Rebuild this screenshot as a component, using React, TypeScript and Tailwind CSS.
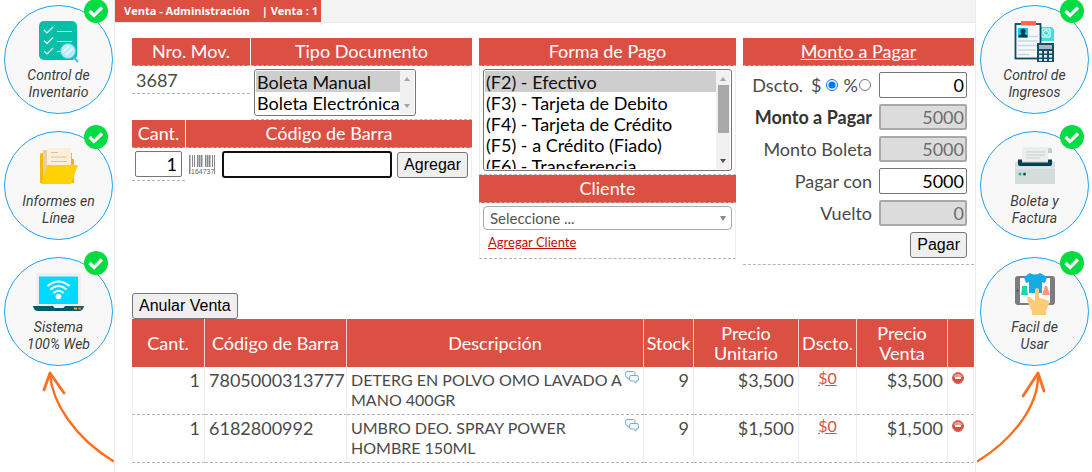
import React from 'react';

const ITEMS = [
  { qty: 1, code: '7805000313777', name: 'DETERG EN POLVO OMO LAVADO A MANO 400GR', stock: 9, unit: '$3,500', total: '$3,500' },
  { qty: 1, code: '6182800992', name: 'UMBRO DEO. SPRAY POWER HOMBRE 150ML', stock: 9, unit: '$1,500', total: '$1,500' },
];

const PAYMENTS = [
  '(F2) - Efectivo',
  '(F3) - Tarjeta de Debito',
  '(F4) - Tarjeta de Crédito',
  '(F5) - a Crédito (Fiado)',
  '(F6) - Transferencia',
];

const BARS = [0, 3, 5, 8, 10, 12, 16, 18, 20, 23, 25];

/* ---------- feature icons ---------- */

function ChecklistIcon() {
  return (
    <svg width="40" height="42" viewBox="0 0 40 42" fill="none">
      <rect width="38" height="39" rx="5" fill="#06bfa8" />
      <g stroke="#fff" strokeWidth="1.2">
        <path d="M5 9l3 3 6-6M5 19.500l3 3 6-6M5 30l3 3 6-6" />
        <path d="M18 10.500h15M18 20.500h15M18 30.500h6" />
      </g>
      <circle cx="29" cy="30" r="7.500" fill="#b5ebfb" stroke="#5fc9ee" />
      <path d="M24 31l6-6M27 34l7-7" stroke="#dff7ff" strokeWidth="2" />
      <path d="M34.500 36l4.500 5" stroke="#4db8e8" strokeWidth="2" />
    </svg>
  );
}

function FolderIcon() {
  return (
    <svg width="38" height="38" viewBox="0 0 38 38">
      <path d="M0 8q0-2 2-2h30v6h2v24H0z" fill="#f5b70c" />
      <path d="M3 3h24v32H3z" fill="#e9cfa9" />
      <path d="M7 1h24v28H7z" fill="#fdeedc" />
      <path d="M11 5.500h7M11 10h16M11 14.500h16" stroke="#d9c19a" strokeWidth="1.200" />
      <path d="M7 18h31l-7 19H1z" fill="#ffd203" />
    </svg>
  );
}

function LaptopIcon() {
  return (
    <svg width="52" height="38" viewBox="0 0 52 38" fill="none">
      <rect x="3" width="45" height="35" rx="2" fill="#efefef" />
      <rect x="6" y="3.500" width="39" height="27.500" fill="#00d9ff" />
      <g stroke="#fff" strokeWidth="1.900">
        <path d="M14.500 13q11-9 22 0M17.500 16.500q8-7 16 0M20.500 20q5-4.500 10 0" />
      </g>
      <circle cx="25.500" cy="23.500" r="2.800" fill="#fff" />
      <path d="M0 33h51q-1 5-5 5H5q-4 0-5-5z" fill="#035a6e" />
      <path d="M20 33h12l-1.500 2h-9z" fill="#e8f4f7" />
      <path d="M41 34.500h3v2h-3z" fill="#ff9f43" />
      <path d="M45 34.500h3v2h-3z" fill="#ff6b4a" />
    </svg>
  );
}

function ClipboardIcon() {
  return (
    <svg width="42" height="42" viewBox="0 0 42 42" fill="none">
      <path d="M27 6h11l2 3v11H27z" fill="#3fe0dc" />
      <path d="M28 8h8v8h-8z" stroke="#fff" />
      <circle cx="32" cy="12" r="2.500" stroke="#fff" />
      <rect x="1.500" y="3" width="25" height="34.500" fill="#f6f8f9" stroke="#0a4b63" strokeWidth="1.800" />
      <path d="M7 0h15v4.500H7z" fill="#ff6a4d" />
      <path d="M4 7h10v9.500H4z" fill="#00d4f5" />
      <path d="M6.500 10a2.500 2.500 0 115 0c0 2-1 3-1 3l3 1.500v2H4.500v-2l3-1.500s-1-1-1-3z" fill="#08384d" />
      <path d="M15 15.500h9M4 20h20M4 24.500h19M4 29h18M4 33.500h11" stroke="#c9d6e2" strokeWidth="1.600" />
      <rect x="23" y="22" width="17" height="19" fill="#164e68" />
      <path d="M25 24h13v4H25z" fill="#aab6c6" />
      <path d="M25 30h3v2.500h-3zM30 30h3v2.500h-3zM35 30h3v2.500h-3zM25 34h3v2.500h-3zM30 34h3v2.500h-3zM35 34h3v2.500h-3zM25 38h3v2h-3zM30 38h3v2h-3zM35 38h3v2h-3z" fill="#dcebf2" />
    </svg>
  );
}

function PrinterIcon() {
  return (
    <svg width="42" height="38" viewBox="0 0 42 38" fill="none">
      <path d="M34 1q4-1 4 2v3h-4z" fill="#c3cccc" />
      <path d="M8 3q0-3 3-3h25q-2 1-2 4v14H8z" fill="#eceeee" />
      <path d="M1 16q0-2 3-2h34q3 0 3 2v21H1z" fill="#d5dcdc" />
      <path d="M1 20h40v2H1z" fill="#e0e5e5" />
      <path d="M4 12.500h4v3h26v-3h4V17q0 2-3 2H7q-3 0-3-2z" fill="#063f53" />
      <path d="M8 8h26v6H8z" fill="#eceeee" />
      <path d="M12 5h19M12 8h19M12 11h14" stroke="#c6cdcd" />
      <circle cx="6" cy="27" r="1.500" fill="#10b8a0" />
      <circle cx="10.500" cy="27" r="1.500" fill="#0a5366" />
    </svg>
  );
}

function TabletIcon() {
  return (
    <svg width="40" height="42" viewBox="0 0 40 42">
      <rect y="3" width="40" height="29" rx="3" fill="#7c7c7f" />
      <path d="M5 5h30v25H5z" fill="#fafafa" />
      <circle cx="2.500" cy="17.500" r="1" fill="#444" />
      <path d="M7 13h5v3l1 6H6l1-6z" fill="#1ed3ad" />
      <path d="M30 13h2l3 9h-8z" fill="#ff9879" />
      <path d="M15 0q5 3 10 0l7 4-2 6-3-1v11H14V9l-3 1-2-6z" fill="#16abe3" />
      <path d="M20 18q0-3 2-3t2 3v7l8 2q3 1 2 4l-3 7v4H17v-4q-4-6-5-13 2-3 5 1l3 2z" fill="#fccb78" />
    </svg>
  );
}

const LEFT_FEATURES = [
  { label: ['Control de', 'Inventario'], icon: <ChecklistIcon /> },
  { label: ['Informes en', 'Línea'], icon: <FolderIcon /> },
  { label: ['Sistema', '100% Web'], icon: <LaptopIcon /> },
];

const RIGHT_FEATURES = [
  { label: ['Control de', 'Ingresos'], icon: <ClipboardIcon /> },
  { label: ['Boleta y', 'Factura'], icon: <PrinterIcon /> },
  { label: ['Facil de', 'Usar'], icon: <TabletIcon /> },
];

function Feature({ label, icon }: { label: string[]; icon: React.ReactNode }) {
  return (
    <li className="relative flex size-[109px] flex-col items-center rounded-full border border-[#1ba3f5] bg-[#f8f8f8] pt-[15px]">
      <div className="flex h-[46px] items-start">{icon}</div>
      <p className="text-center font-['Roboto',sans-serif] text-[14px] leading-[17px] text-[#3c3c3c] italic">
        {label[0]}
        <br />
        {label[1]}
      </p>
      <svg className="absolute -top-[7px] right-1" width="24" height="24" viewBox="0 0 24 24" fill="none">
        <circle cx="12" cy="12" r="12" fill="#02dc43" />
        <path d="M5.500 12l4.500 4.500 8-8" stroke="#fff" strokeWidth="3.200" />
      </svg>
    </li>
  );
}

/* ---------- form pieces ---------- */

function Heading({ children, className = '' }: { children?: React.ReactNode; className?: string }) {
  return (
    <h2 className={`h-7 border-b border-dashed border-[#d8a09a] bg-[#dc5044] text-center leading-[27px] text-white ${className}`}>
      {children}
    </h2>
  );
}

function ScrollTrack({ thumb }: { thumb?: boolean }) {
  return (
    <div aria-hidden="true" className="flex w-[14px] flex-col items-center justify-between bg-[#f1f1f1] py-1.5">
      <svg width="6" height="4" viewBox="0 0 6 4"><path d="M3 0l3 4H0z" fill="#a3a3a3" /></svg>
      {thumb && <div className="mt-1 mb-auto h-12 w-[11px] bg-[#a8a8a8]" />}
      <svg width="6" height="4" viewBox="0 0 6 4"><path d="M0 0h6L3 4z" fill={thumb ? '#505050' : '#a3a3a3'} /></svg>
    </div>
  );
}

function ListBox({ label, options, className, thumb }: { label: string; options: string[]; className: string; thumb?: boolean }) {
  return (
    <div className={`flex overflow-hidden rounded-[3px] border border-[#767676] bg-white p-px ${className}`}>
      <select
        aria-label={label}
        size={options.length}
        defaultValue={options[0]}
        className="h-full min-w-0 flex-1 overflow-hidden bg-none p-0 text-black outline-none [scrollbar-width:none]"
      >
        {options.map((o) => (
          <option key={o} className="h-[21px] min-h-0 px-px py-0 leading-[21px] checked:bg-[#cecece]">
            {o}
          </option>
        ))}
      </select>
      <ScrollTrack thumb={thumb} />
    </div>
  );
}

function Button({ children }: { children: React.ReactNode }) {
  return (
    <button className="h-[26px] shrink-0 rounded-[3px] border border-[#767676] bg-[#efefef] px-1.5 font-['Liberation_Sans',sans-serif] text-base leading-6 whitespace-nowrap text-black">
      {children}
    </button>
  );
}

function AmountRow({ id, label, value, locked, bold }: { id: string; label: React.ReactNode; value: string; locked?: boolean; bold?: boolean }) {
  return (
    <div className="flex items-center justify-end gap-[7px]">
      <label htmlFor={id} className={bold ? 'font-bold text-[#333]' : ''}>{label}</label>
      <input
        id={id}
        defaultValue={value}
        disabled={locked}
        className="h-[26px] w-[88px] rounded-[2px] border border-[#767676] bg-white px-0.5 text-right text-black disabled:border-2 disabled:border-[#a9a9a9] disabled:bg-[#dcdcdc] disabled:px-px disabled:text-[#6d6d6d]"
      />
    </div>
  );
}

function DocumentPanel() {
  return (
    <section>
      <div className="flex gap-px">
        <div className="w-[118px] shrink-0">
          <Heading>Nro. Mov.</Heading>
          <p className="h-7 border-b border-dashed border-[#b5b5b5] pl-1 leading-7">3687</p>
        </div>
        <div className="min-w-0 flex-1">
          <Heading>Tipo Documento</Heading>
          <div className="h-[54px] border-r border-b border-r-[#eee] border-b-[#b5b5b5] px-[3px] pt-[3px] [border-bottom-style:dashed]">
            <ListBox label="Tipo Documento" options={['Boleta Manual', 'Boleta Electrónica']} className="h-[47px] w-[162px]" />
          </div>
        </div>
      </div>
      <div className="flex gap-px">
        <div className="w-[53px] shrink-0">
          <Heading>Cant.</Heading>
          <div className="border-b border-dashed border-[#b5b5b5] px-[3px] py-[3px]">
            <input aria-label="Cantidad" defaultValue="1" className="block h-[26px] w-full rounded-[2px] border border-[#767676] px-1 text-right text-black" />
          </div>
        </div>
        <div className="min-w-0 flex-1">
          <Heading>Código de Barra</Heading>
          <div className="flex items-center gap-[5px] border-r border-[#eee] px-[3px] pt-[3px]">
            <svg width="28" height="20" viewBox="0 0 28 20" className="shrink-0">
              {BARS.map((x) => (
                <rect key={x} x={x} width={x % 2 ? 1 : 1.5} height={x === 0 || x === 25 ? 19 : 12} fill="#8a8a8a" />
              ))}
              <text x="2" y="19" fontSize="7" fill="#666" fontFamily="Liberation Sans">164737</text>
            </svg>
            <input autoFocus aria-label="Código de Barra" className="h-[27px] min-w-0 flex-1 rounded-[3px] border-2 border-[#111] px-1 outline-none" />
            <Button>Agregar</Button>
          </div>
        </div>
      </div>
    </section>
  );
}

function PaymentPanel() {
  return (
    <section>
      <Heading>Forma de Pago</Heading>
      <div className="border-x border-b border-x-[#eee] border-b-[#b5b5b5] p-[3px] [border-bottom-style:dashed]">
        <ListBox label="Forma de Pago" options={PAYMENTS} className="h-[102px]" thumb />
      </div>
      <Heading>Cliente</Heading>
      <div className="h-14 border-x border-b border-x-[#eee] border-b-[#b5b5b5] p-[3px] [border-bottom-style:dashed]">
        <div className="relative flex items-center">
          <select aria-label="Cliente" className="h-6 w-full appearance-none rounded-[4px] border border-[#aaa] bg-white px-1.5 text-[15px] text-[#555]">
            <option>Seleccione ...</option>
          </select>
          <svg className="pointer-events-none absolute right-1.5" width="6" height="5" viewBox="0 0 6 5"><path d="M0 0h6L3 5z" fill="#888" /></svg>
        </div>
        <a href="#cliente" className="block pl-[5px] text-[13px] leading-6 text-[#c00d0d] underline">Agregar Cliente</a>
      </div>
    </section>
  );
}

function TotalsPanel() {
  return (
    <section className="border-b border-dashed border-[#b5b5b5] pb-1.5">
      <Heading className="underline">Monto a Pagar</Heading>
      <div className="flex flex-col gap-1.5 pt-1.5 pr-[7px] leading-[26px]">
        <div className="flex items-center justify-end">
          <label htmlFor="dscto" className="mr-2">Dscto.</label>
          <label htmlFor="pesos">$</label>
          <input id="pesos" type="radio" name="modo" defaultChecked className="mr-1.5 ml-1 size-3 accent-[#0075ff]" />
          <label htmlFor="pct">%</label>
          <input id="pct" type="radio" name="modo" className="mr-2 ml-px size-3" />
          <input id="dscto" defaultValue="0" className="h-[26px] w-[88px] rounded-[2px] border border-[#767676] px-0.5 text-right text-black" />
        </div>
        <AmountRow id="monto" label="Monto a Pagar" value="5000" locked bold />
        <AmountRow id="boleta" label="Monto Boleta" value="5000" locked />
        <AmountRow id="pagar" label="Pagar con" value="5000" />
        <AmountRow id="vuelto" label="Vuelto" value="0" locked />
        <div className="flex justify-end">
          <Button>Pagar</Button>
        </div>
      </div>
    </section>
  );
}

function CommentIcon() {
  return (
    <svg width="14" height="13" viewBox="0 0 14 13" fill="#f3f8fd" stroke="#86a8d0">
      <path d="M2 .5h6.500q1.500 0 1.500 2v2q0 2-1.500 2H5L3 8.500v-2H2q-1.500 0-1.500-2v-2q0-2 1.500-2z" />
      <path d="M6 4.500h6q1.500 0 1.500 2v1.500q0 2-1.500 2h-1v2.200L8.500 10H6q-1.500 0-1.500-2V6.500q0-2 1.500-2z" />
    </svg>
  );
}

function RemoveIcon() {
  return (
    <svg width="12" height="12" viewBox="0 0 12 12">
      <circle cx="6" cy="6" r="5.500" fill="#e0493f" stroke="#d9665d" />
      <path d="M1.500 5a4.600 4 0 019 0z" fill="#f09a92" />
      <path d="M3 5h6v2H3z" fill="#fff" />
    </svg>
  );
}

function ItemsTable() {
  const th = 'border-r border-[#f6cfcb] p-0 font-normal last:border-r-0';
  const td = 'border-r border-r-[#eee] border-b border-b-[#b5b5b5] px-1 pt-[3px] align-top [border-bottom-style:dashed]';
  return (
    <table className="w-full table-fixed border-separate border-spacing-0 leading-5">
      <thead>
        <tr className="h-12 bg-[#dc5044] text-white">
          <th className={`${th} w-[73px]`}>Cant.</th>
          <th className={`${th} w-[142px]`}>Código de Barra</th>
          <th className={th}>Descripción</th>
          <th className={`${th} w-[50px]`}>Stock</th>
          <th className={`${th} w-[105px]`}>Precio<br />Unitario</th>
          <th className={`${th} w-[58px]`}>Dscto.</th>
          <th className={`${th} w-[91px]`}>Precio<br />Venta</th>
          <th className={`${th} w-[26px]`} aria-label="Quitar" />
        </tr>
      </thead>
      <tbody>
        {ITEMS.map((item) => (
          <tr key={item.code} className="h-12">
            <td className={`${td} border-l border-l-[#eee] text-right`}>{item.qty}</td>
            <td className={td}>{item.code}</td>
            <td className={`${td} relative`}>
              <p className="text-base leading-5">{item.name}</p>
              <button aria-label="Comentario" className="absolute top-1 right-1"><CommentIcon /></button>
            </td>
            <td className={`${td} text-right`}>{item.stock}</td>
            <td className={`${td} text-right`}>{item.unit}</td>
            <td className={`${td} text-center`}>
              <a href="#dscto" className="block text-base leading-4 text-[#dc5044] underline">$0</a>
            </td>
            <td className={`${td} text-right`}>{item.total}</td>
            <td className={td}>
              <button aria-label="Quitar" className="block pt-0.5"><RemoveIcon /></button>
            </td>
          </tr>
        ))}
      </tbody>
    </table>
  );
}

export default function App() {
  return (
    <div className="flex min-h-screen bg-white font-['Lato',sans-serif] text-lg text-[#4a4a4a]">
      <aside className="w-[114px] shrink-0 pt-[5px] pl-1">
        <ul className="flex flex-col gap-[17px]">
          {LEFT_FEATURES.map((f) => <Feature key={f.label[1]} {...f} />)}
        </ul>
        <svg className="mt-1 ml-auto" width="72" height="94" viewBox="0 0 72 94" fill="none" stroke="#ff6d1f" strokeLinecap="round" strokeLinejoin="round">
          <path d="M8 4C10 32 32 67 71 91" strokeWidth="2.400" />
          <path d="M2 20L8 3l14 20" strokeWidth="2.800" />
        </svg>
      </aside>

      <main className="min-w-0 flex-1 border-x border-[#ececec]">
        <header className="flex h-[23px] border-b border-[#e8e8e8] bg-[#f3f3f3]">
          <h1 className="flex h-[22px] items-center gap-3 bg-[#dc5044] pr-[3px] pl-[9px] font-['Open_Sans',sans-serif] text-[11px] font-bold text-white">
            <span>Venta - Administración</span>
            <span>| Venta : 1</span>
          </h1>
        </header>
        <div className="pt-[15px] pr-px pl-[17px]">
          <div className="grid grid-cols-[minmax(0,340fr)_minmax(0,257fr)_minmax(0,231fr)] items-start gap-[7px]">
            <DocumentPanel />
            <PaymentPanel />
            <TotalsPanel />
          </div>
          <div className="flex pt-7">
            <Button>Anular Venta</Button>
          </div>
          <ItemsTable />
        </div>
      </main>

      <aside className="w-[116px] shrink-0 pt-[5px]">
        <ul className="flex flex-col gap-[17px] pl-1">
          {RIGHT_FEATURES.map((f) => <Feature key={f.label[1]} {...f} />)}
        </ul>
        <svg className="mt-1 ml-px" width="72" height="94" viewBox="0 0 72 94" fill="none" stroke="#ff6d1f" strokeLinecap="round" strokeLinejoin="round">
          <path d="M61 4C62 34 38 68 1 91" strokeWidth="2.400" />
          <path d="M46 26L61 3l6 18" strokeWidth="2.800" />
        </svg>
      </aside>
    </div>
  );
}
